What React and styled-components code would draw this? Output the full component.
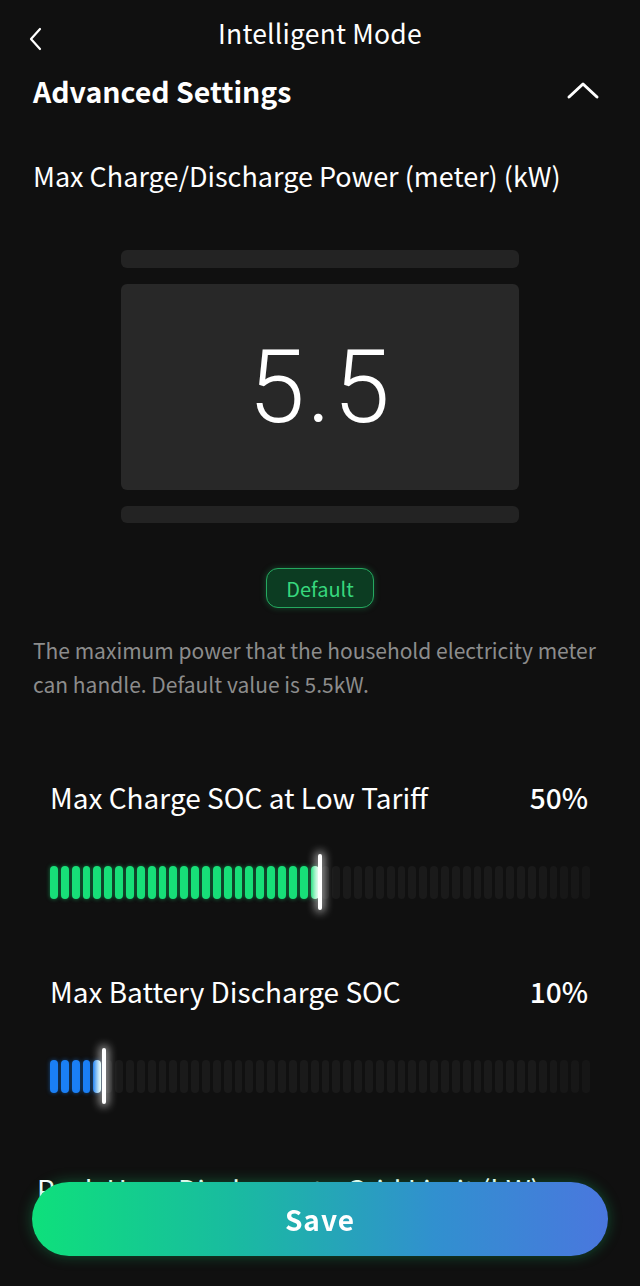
import React from "react";
import styled, { createGlobalStyle } from "styled-components";

const GlobalStyle = createGlobalStyle`
  html, body {
    margin: 0;
    padding: 0;
    background: #101010;
  }
  body {
    font-family: "Noto Sans CJK SC", "Noto Sans", sans-serif;
    color: #fff;
  }
`;

const Page = styled.div`
  width: 640px;
  min-height: 1286px;
  background: #101010;
  overflow: hidden;
`;

const Header = styled.div`
  position: relative;
  height: 64px;
  display: flex;
  align-items: center;
  justify-content: center;
`;

const BackButton = styled.div`
  position: absolute;
  left: 26px;
  top: 25px;
  width: 20px;
  height: 28px;
  display: flex;
`;

const Title = styled.h1`
  margin: 0;
  font-size: 26.5px;
  font-weight: 400;
  letter-spacing: 0.2px;
`;

const SectionHead = styled.div`
  display: flex;
  align-items: center;
  justify-content: space-between;
  padding: 0 40px 0 33px;
  height: 52px;
`;

const SectionTitle = styled.h2`
  margin: 0;
  font-size: 28.5px;
  font-weight: 700;
`;

const FieldLabel = styled.div`
  padding: 43px 33px 0;
  font-size: 27px;
  line-height: 34px;
  white-space: nowrap;
`;

const Picker = styled.div`
  margin: 57px auto 0;
  width: 398px;
  display: flex;
  flex-direction: column;
  gap: 16px;
`;

const Slot = styled.div`
  height: ${({ h }) => h}px;
  border-radius: 6px;
  background: ${({ active }) => (active ? "#282828" : "#232323")};
  display: flex;
  align-items: center;
  justify-content: center;
`;

const BigValue = styled.span`
  font-family: Roboto, "Liberation Sans", sans-serif;
  font-weight: 300;
  font-size: 102px;
  line-height: 1;
  letter-spacing: 2px;
`;

const BadgeRow = styled.div`
  display: flex;
  justify-content: center;
  margin-top: 45px;
`;

const Badge = styled.div`
  width: 108px;
  height: 40px;
  box-sizing: border-box;
  border: 1.5px solid #25a85f;
  border-radius: 12px;
  background: #0c3c22;
  color: #37d77d;
  font-size: 20px;
  display: flex;
  align-items: center;
  justify-content: center;
  box-shadow: 0 0 6px rgba(35, 180, 100, 0.35);
`;

const Description = styled.p`
  margin: 25px 33px 0;
  color: #8c8c8c;
  font-size: 21px;
  line-height: 34px;
`;

const SocBlock = styled.div`
  padding: 0 50px 0 50px;
  margin-top: ${({ top }) => top}px;
`;

const SocHead = styled.div`
  display: flex;
  justify-content: space-between;
  align-items: center;
  font-size: 28px;
  height: 40px;
  white-space: nowrap;
`;

const SocValue = styled.span`
  font-weight: 500;
  margin-right: 2px;
`;

const Track = styled.div`
  position: relative;
  margin-top: ${({ top }) => top}px;
  width: 540px;
  height: 56px;
  display: flex;
  align-items: center;
`;

const Segments = styled.div`
  width: 100%;
  display: grid;
  grid-template-columns: repeat(50, 1fr);
  column-gap: 3px;
`;

const Segment = styled.div`
  height: 33px;
  border-radius: 4px;
  background: ${({ on, color, edge }) =>
    on ? (edge ? `linear-gradient(90deg, ${color}, #e8fff2)` : color) : "#1a1a1a"};
  box-shadow: ${({ on, color }) => (on ? `0 0 4px ${color}88` : "none")};
  opacity: ${({ on, fade }) => (on ? 1 : fade)};
`;

const Thumb = styled.div`
  position: absolute;
  top: 0;
  width: 4px;
  margin-left: -2px;
  height: 56px;
  border-radius: 2px;
  background: #fff;
  box-shadow: 0 0 9px 3px rgba(255, 255, 255, 0.55);
`;

const HiddenLine = styled.div`
  margin: 68px 37px 0;
  font-size: 28px;
  line-height: 34px;
  white-space: nowrap;
`;

const SaveButton = styled.button`
  position: fixed;
  left: 32px;
  right: 32px;
  bottom: 30px;
  height: 74px;
  border: none;
  border-radius: 37px;
  background: linear-gradient(90deg, #0ee07b 0%, #19bba0 35%, #3190cf 70%, #4a77de 100%);
  color: #fff;
  font-family: "Noto Sans CJK SC", "Noto Sans", sans-serif;
  font-size: 28px;
  font-weight: 700;
  letter-spacing: 1px;
  box-shadow: 0 0 14px rgba(20, 200, 110, 0.35);
`;

const SocSlider = ({ value, color, top }) => {
  const filled = Math.round(value / 2);
  return (
    <Track top={top}>
      <Segments>
        {Array.from({ length: 50 }).map((_, i) => (
          <Segment
            key={i}
            on={i < filled}
            edge={i === filled - 1}
            color={color}
            fade={i > 44 ? 1 - (i - 44) * 0.08 : 1}
          />
        ))}
      </Segments>
      <Thumb style={{ left: `${value}%` }} />
    </Track>
  );
};

export default function App() {
  return (
    <Page>
      <GlobalStyle />
      <Header>
        <BackButton>
          <svg width="20" height="28" viewBox="0 0 20 28" fill="none">
            <path d="M14 4 L5 14 L14 24" stroke="#fff" strokeWidth="2.2" strokeLinecap="round" strokeLinejoin="round" />
          </svg>
        </BackButton>
        <Title>Intelligent Mode</Title>
      </Header>
      <SectionHead>
        <SectionTitle>Advanced Settings</SectionTitle>
        <svg width="34" height="20" viewBox="0 0 34 20" fill="none">
          <path d="M3 17 L17 4 L31 17" stroke="#fff" strokeWidth="3" strokeLinecap="round" strokeLinejoin="round" />
        </svg>
      </SectionHead>
      <FieldLabel>Max Charge/Discharge Power (meter) (kW)</FieldLabel>
      <Picker>
        <Slot h={18} />
        <Slot h={206} active>
          <BigValue>5.5</BigValue>
        </Slot>
        <Slot h={17} />
      </Picker>
      <BadgeRow>
        <Badge>Default</Badge>
      </BadgeRow>
      <Description>
        The maximum power that the household electricity meter can handle. Default value is 5.5kW.
      </Description>
      <SocBlock top={76}>
        <SocHead>
          <span>Max Charge SOC at Low Tariff</span>
          <SocValue>50%</SocValue>
        </SocHead>
        <SocSlider value={50} color="#17df78" top={37} />
      </SocBlock>
      <SocBlock top={61}>
        <SocHead>
          <span>Max Battery Discharge SOC</span>
          <SocValue>10%</SocValue>
        </SocHead>
        <SocSlider value={10} color="#1a7ff5" top={37} />
      </SocBlock>
      <HiddenLine>Peak Hour Discharge to Grid Limit (kW)</HiddenLine>
      <SaveButton>Save</SaveButton>
    </Page>
  );
}
